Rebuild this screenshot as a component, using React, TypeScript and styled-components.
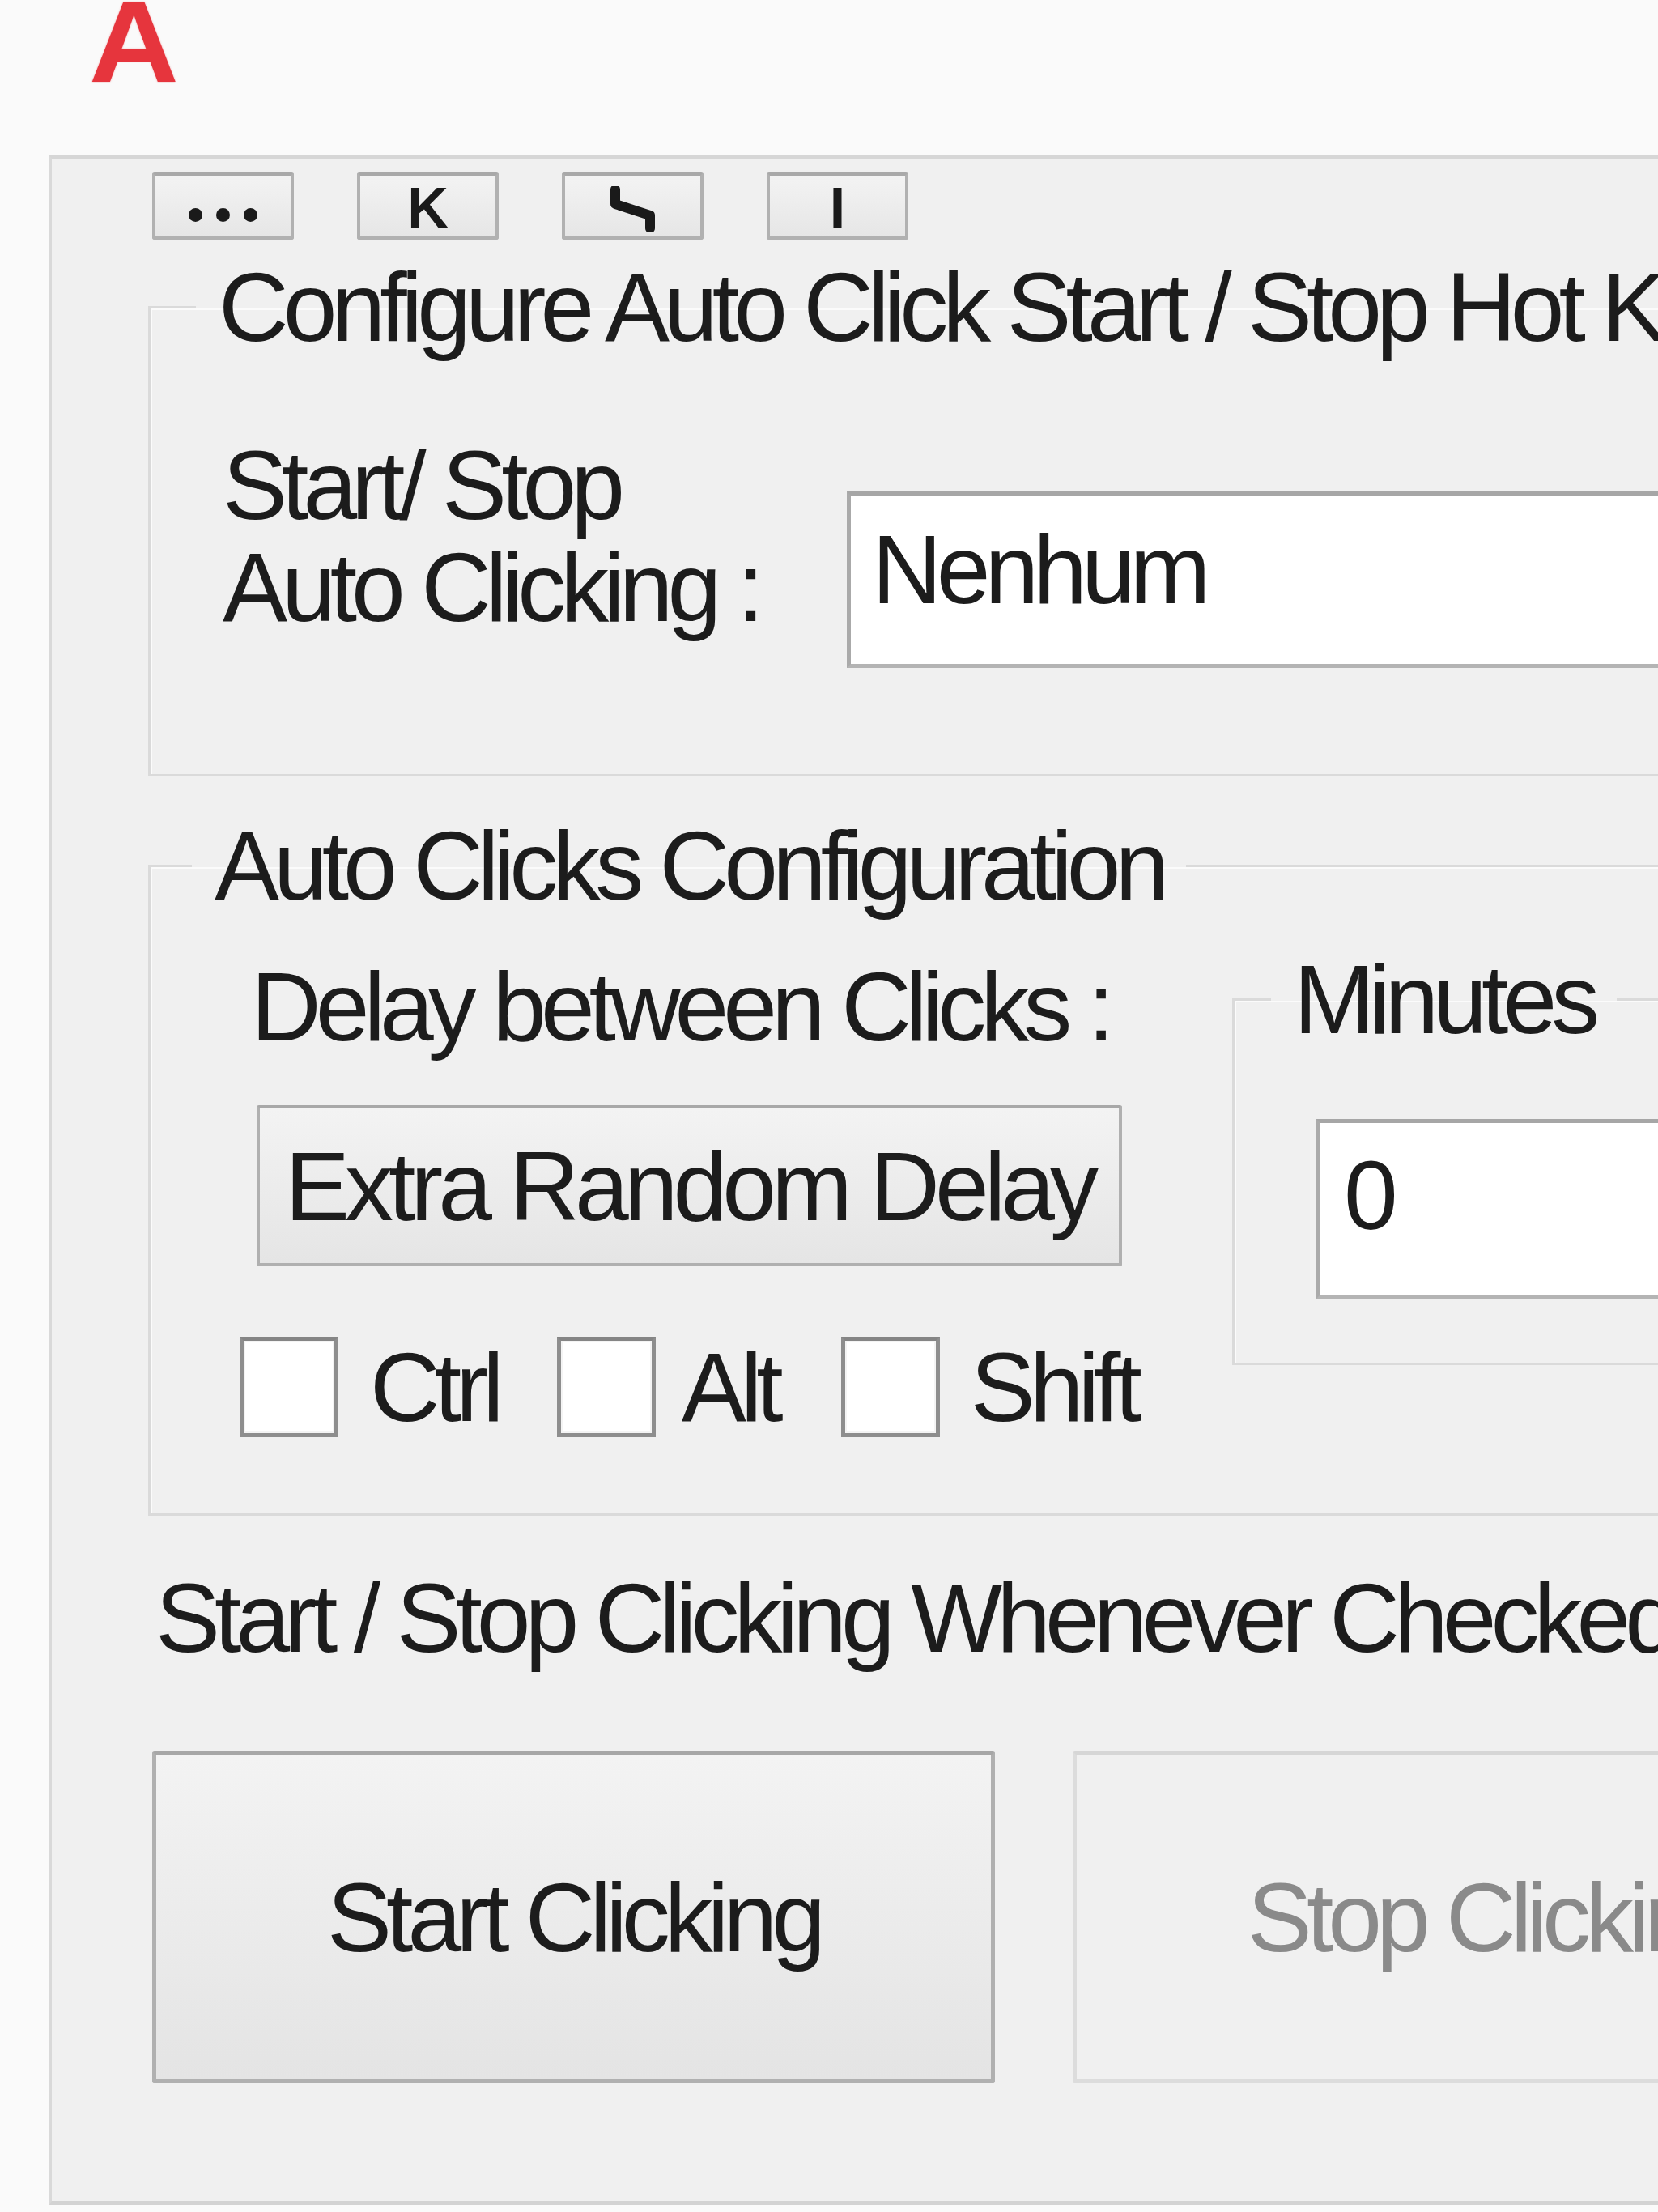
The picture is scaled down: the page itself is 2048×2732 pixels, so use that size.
import React from "react";
import styled, { createGlobalStyle } from "styled-components";

const Global = createGlobalStyle`
  html, body {
    margin: 0;
    padding: 0;
    background: #fafafa;
  }
  body {
    width: 2048px;
    height: 2732px;
    overflow: hidden;
    font-family: "Liberation Sans", Arial, sans-serif;
    color: #1c1c1c;
  }
  * { box-sizing: border-box; }
`;

const Page = styled.div`
  width: 2048px;
  height: 2732px;
  overflow: hidden;
  display: flex;
  flex-direction: column;
`;

const Header = styled.header`
  height: 192px;
  flex: none;
  padding-left: 110px;
`;

const Logo = styled.div`
  font-family: "Liberation Sans", Arial, sans-serif;
  font-weight: 700;
  font-size: 142px;
  line-height: 142px;
  margin-top: -19px;
  color: #e6353d;
  transform: scaleX(1.08);
  transform-origin: left center;
  text-shadow: 0 0 2px rgba(230, 53, 61, 0.5);
`;

const Window = styled.main`
  margin-left: 61px;
  width: 2200px;
  height: 2531px;
  flex: none;
  background: #f0f0f0;
  border-left: 3px solid #d9d9d9;
  border-top: 4px solid #d6d6d6;
  border-bottom: 4px solid #d3d3d3;
  padding-top: 17px;
  display: flex;
  flex-direction: column;
  align-items: flex-start;
  font-size: 120px;
  line-height: 120px;
  letter-spacing: -7px;
`;

const Toolbar = styled.div`
  margin-left: 124px;
  display: flex;
  gap: 78px;
`;

const ToolButton = styled.div`
  width: 175px;
  height: 83px;
  border: 4px solid #b1b1b1;
  border-top-color: #a9a9a9;
  border-radius: 3px;
  background: linear-gradient(#f3f3f3, #e6e6e6);
  display: flex;
  align-items: center;
  justify-content: center;
  font-size: 70px;
  line-height: 70px;
  font-weight: 700;
  letter-spacing: 0;
  color: #1a1a1a;
`;

const DotRow = styled.span`
  display: flex;
  gap: 17px;
  margin-top: 22px;
`;

const Dot = styled.span`
  width: 17px;
  height: 17px;
  border-radius: 50%;
  background: #1a1a1a;
`;

const Glyph = styled.span`
  display: block;
  margin-top: 4px;
`;

const Group = styled.fieldset<{ $mt: number; $width: number }>`
  margin: ${(p) => p.$mt}px 0 0 119px;
  padding: 0;
  width: ${(p) => p.$width}px;
  border: 3px solid #dadada;
  border-right: none;
  box-shadow: inset 2px 2px 0 #fbfbfb;
  min-width: 0;
`;

const Legend = styled.legend<{ $ml: number }>`
  margin-left: ${(p) => p.$ml}px;
  padding: 0 28px;
  font-size: 120px;
  line-height: 120px;
  letter-spacing: -7px;
  white-space: nowrap;
`;

const HotkeyRow = styled.div`
  display: grid;
  grid-template-columns: 771px 1fr;
  align-items: start;
  padding: 0 0 131px 89px;
`;

const TwoLineLabel = styled.div`
  margin-top: 97px;
  line-height: 126px;
  white-space: nowrap;
`;

const TextBox = styled.div<{ $mt: number; $h: number; $pl: number; $pt: number; $ml?: number }>`
  margin-top: ${(p) => p.$mt}px;
  margin-left: ${(p) => p.$ml ?? 0}px;
  height: ${(p) => p.$h}px;
  width: 1400px;
  background: #fff;
  border: 5px solid #b4b4b4;
  border-top-color: #a6a6a6;
  border-left-color: #aaaaaa;
  padding: ${(p) => p.$pt}px 0 0 ${(p) => p.$pl}px;
  white-space: nowrap;
`;

const ConfigRow = styled.div`
  display: flex;
  align-items: flex-start;
  padding-bottom: 94px;
`;

const LeftColumn = styled.div`
  width: 1336px;
  flex: none;
  padding-left: 110px;
  display: flex;
  flex-direction: column;
  align-items: flex-start;
`;

const Label = styled.div<{ $mt: number; $ml: number }>`
  margin-top: ${(p) => p.$mt}px;
  margin-left: ${(p) => p.$ml}px;
  white-space: nowrap;
`;

const PushButton = styled.div`
  margin: 62px 0 0 21px;
  width: 1069px;
  height: 199px;
  border: 4px solid #b0b0b0;
  border-top-color: #a8a8a8;
  border-radius: 3px;
  background: linear-gradient(#f3f3f3, #e5e5e5);
  display: flex;
  align-items: center;
  justify-content: center;
  white-space: nowrap;
  letter-spacing: -6px;
`;

const CheckRow = styled.div`
  margin-top: 87px;
  height: 124px;
  display: flex;
  align-items: center;
`;

const CheckItem = styled.label<{ $gap: number; $after: number }>`
  display: flex;
  align-items: center;
  gap: ${(p) => p.$gap}px;
  margin-right: ${(p) => p.$after}px;
  white-space: nowrap;
`;

const CheckBox = styled.span`
  width: 122px;
  height: 124px;
  flex: none;
  background: #fff;
  border: 5px solid #8e8e8e;
  border-top-color: #858585;
  box-shadow: inset 0 0 0 2px #f4f4f4;
`;

const MinutesGroup = styled.fieldset`
  margin: 45px 0 0 0;
  padding: 0 0 79px 0;
  width: 900px;
  flex: none;
  border: 3px solid #dadada;
  border-right: none;
  box-shadow: inset 2px 2px 0 #fbfbfb;
  min-width: 0;
`;

const Caption = styled.div`
  margin: 66px 0 0 128px;
  white-space: nowrap;
`;

const ActionRow = styled.div`
  margin: 105px 0 0 124px;
  display: flex;
  gap: 96px;
`;

const BigButton = styled.div<{ $disabled?: boolean }>`
  width: 1041px;
  height: 410px;
  display: flex;
  align-items: center;
  justify-content: center;
  white-space: nowrap;
  border-radius: 3px;
  border: 5px solid ${(p) => (p.$disabled ? "#dcdcdc" : "#b0b0b0")};
  border-top-color: ${(p) => (p.$disabled ? "#d6d6d6" : "#a7a7a7")};
  background: ${(p) =>
    p.$disabled ? "#f0f0f0" : "linear-gradient(#f3f3f3, #e4e4e4)"};
  color: ${(p) => (p.$disabled ? "#8a8a8a" : "#1c1c1c")};
`;

const HookIcon = () => (
  <svg width="62" height="56" viewBox="0 0 62 56" fill="none" style={{ marginTop: 6 }}>
    <path
      d="M9 4 L9 22 L52 36 L52 52"
      stroke="#1a1a1a"
      strokeWidth="12"
      strokeLinejoin="round"
      strokeLinecap="round"
    />
  </svg>
);

export default function App() {
  return (
    <>
      <Global />
      <Page>
        <Header>
          <Logo>A</Logo>
        </Header>
        <Window>
          <Toolbar>
            <ToolButton>
              <DotRow>
                <Dot />
                <Dot />
                <Dot />
              </DotRow>
            </ToolButton>
            <ToolButton>
              <Glyph>K</Glyph>
            </ToolButton>
            <ToolButton>
              <HookIcon />
            </ToolButton>
            <ToolButton>
              <Glyph>I</Glyph>
            </ToolButton>
          </Toolbar>

          <Group $mt={23} $width={2100}>
            <Legend $ml={56}>Configure Auto Click Start / Stop Hot Keys</Legend>
            <HotkeyRow>
              <TwoLineLabel>
                Start/ Stop
                <br />
                Auto Clicking :
              </TwoLineLabel>
              <TextBox $mt={168} $h={218} $pl={26} $pt={31}>
                Nenhum
              </TextBox>
            </HotkeyRow>
          </Group>

          <Group $mt={50} $width={2100}>
            <Legend $ml={51}>Auto Clicks Configuration</Legend>
            <ConfigRow>
              <LeftColumn>
                <Label $mt={54} $ml={14}>
                  Delay between Clicks :
                </Label>
                <PushButton>Extra Random Delay</PushButton>
                <CheckRow>
                  <CheckItem $gap={39} $after={72}>
                    <CheckBox />
                    Ctrl
                  </CheckItem>
                  <CheckItem $gap={32} $after={78}>
                    <CheckBox />
                    Alt
                  </CheckItem>
                  <CheckItem $gap={38} $after={0}>
                    <CheckBox />
                    Shift
                  </CheckItem>
                </CheckRow>
              </LeftColumn>
              <MinutesGroup>
                <Legend $ml={45}>Minutes</Legend>
                <TextBox $mt={88} $ml={101} $h={222} $pl={29} $pt={29}>
                  0
                </TextBox>
              </MinutesGroup>
            </ConfigRow>
          </Group>

          <Caption>Start / Stop Clicking Whenever Checked</Caption>

          <ActionRow>
            <BigButton>Start Clicking</BigButton>
            <BigButton $disabled>Stop Clicking</BigButton>
          </ActionRow>
        </Window>
      </Page>
    </>
  );
}
